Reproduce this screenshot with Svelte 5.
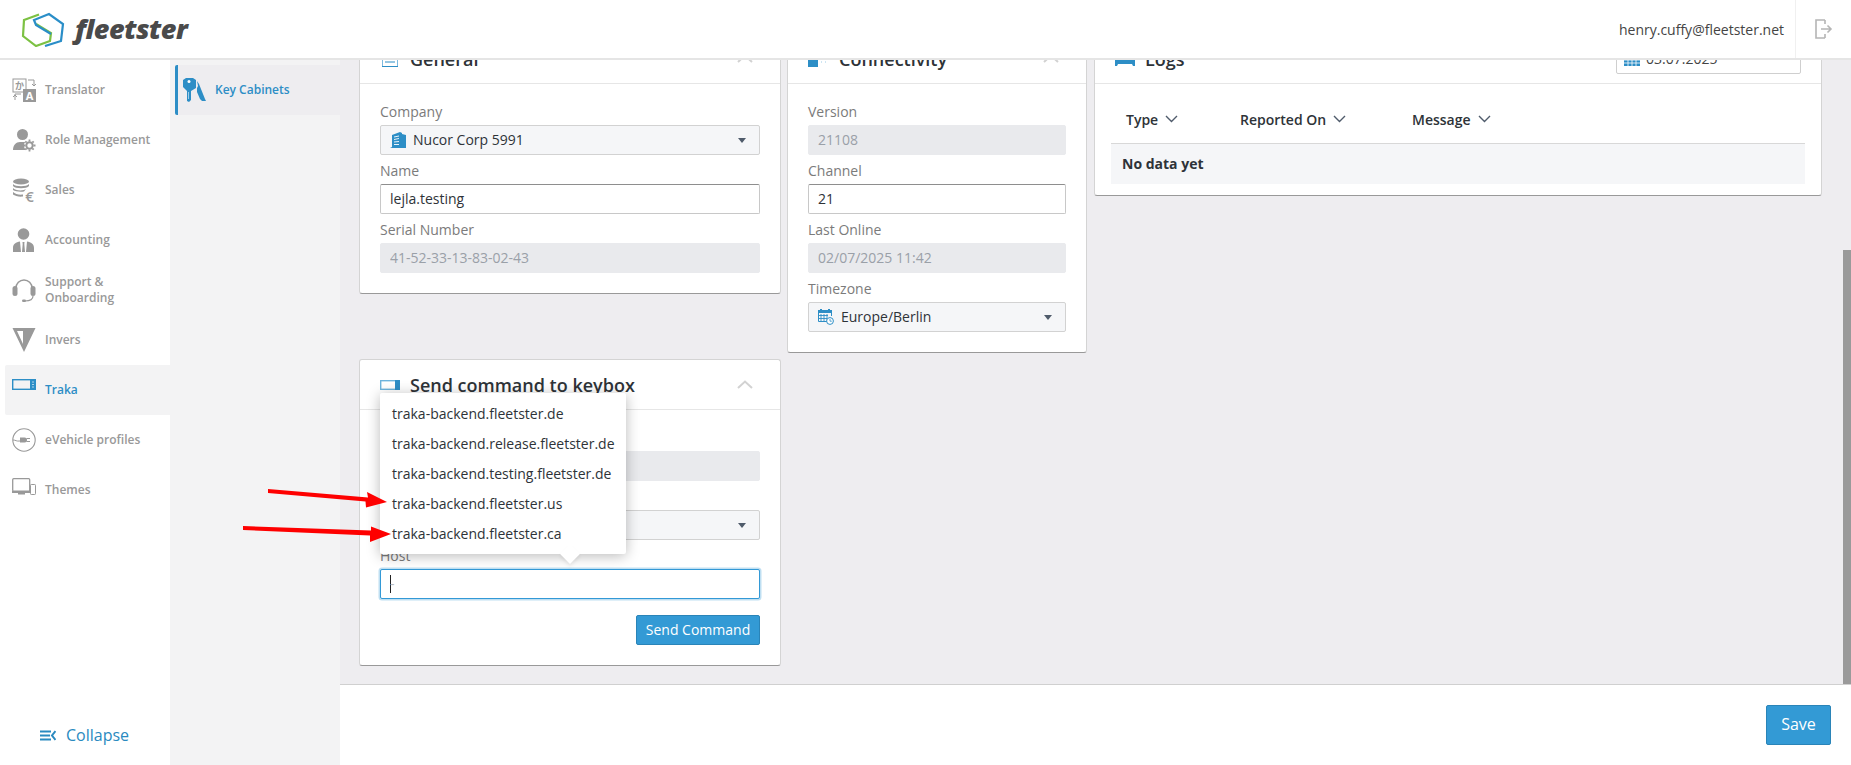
<script>
  const navItems = [
    { label: "Translator", icon: `<rect x="1" y="1" width="13" height="13" fill="none" stroke="#999"/><text x="3" y="11" font-size="9" fill="#999" font-family="Noto Sans CJK JP">か</text><path d="M16 2h6v5M20 6l2 2 2-2M9 16H3v6M1 19l2-2 2 2" fill="none" stroke="#999"/><rect x="11" y="11" width="13" height="13" fill="#999"/><text x="17.5" y="22" font-size="11" font-weight="700" fill="#fff" text-anchor="middle" font-family="Open Sans">A</text>` },
    { label: "Role Management", icon: `<circle cx="10.5" cy="6.5" r="5.5" fill="#999"/><path d="M1 22c0-5 3-8 7-8h6v8z" fill="#999"/><circle cx="17.5" cy="17.5" r="5.5" fill="#fff"/><circle cx="17.5" cy="17.5" r="3.2" fill="none" stroke="#999" stroke-width="2"/><path d="M17.5 11.5v2M17.5 21.5v2M11.5 17.5h2M21.5 17.5h2M13.3 13.3l1.4 1.4M20.3 20.3l1.4 1.4M13.3 21.7l1.4-1.4M20.3 14.7l1.4-1.4" stroke="#999" stroke-width="1.8"/>` },
    { label: "Sales", icon: `<ellipse cx="9" cy="3.5" rx="8" ry="3" fill="#999"/><path d="M1 6c2 3 14 3 16 0v2c-2 3-14 3-16 0zM1 10c2 3 11 3 13 1l-2 2.5c-4 .5-9 0-11-1.500zM1 14c2 2 6 3 10 2.500v2C7 19 3 18 1 16.500z" fill="#999"/><text x="17.5" y="24" font-size="15" fill="#999" text-anchor="middle" font-family="Open Sans">€</text>` },
    { label: "Accounting", icon: `<circle cx="11.500" cy="6" r="5.800" fill="#999"/><path d="M1 24v-4c0-4 3-6 7-6.500L9 24zM22 24v-4c0-4-3-6-7-6.500L14 24zM10.500 14h2l-.2 2 .7 8h-3l.7-8z" fill="#999"/>` },
    { label: "Support & Onboarding", icon: `<path d="M4 13V10a8 8 0 0 1 16 0v3" fill="none" stroke="#999" stroke-width="1.500"/><rect x="0.500" y="8" width="5" height="10" rx="2.500" fill="#999"/><rect x="18.500" y="8" width="5" height="10" rx="2.500" fill="#999"/><path d="M21 18c0 3-3 5-8 5" fill="none" stroke="#999" stroke-width="1.200"/><rect x="10" y="21.500" width="4" height="2.500" rx="1.200" fill="#999"/>` },
    { label: "Invers", icon: `<path fill-rule="evenodd" d="M0.500 0h23L12 24zM5 3l6 13 0-13z" fill="#999"/>` },
    { label: "Traka", active: true, icon: `<rect x="0.700" y="1.700" width="23" height="9.600" fill="none" stroke="#2d8ec6" stroke-width="1.400"/><rect x="18" y="1.700" width="6" height="9.600" fill="#2d8ec6"/><path d="M20 4h2M20 6.500h2M20 9h2" stroke="#cfe6f3" stroke-width=".8"/>` },
    { label: "eVehicle profiles", icon: `<circle cx="12" cy="12" r="11.200" fill="none" stroke="#999" stroke-width="1.100"/><path d="M1 12c3 0 3 1.500 7 1" fill="none" stroke="#999"/><path d="M8 9.500h4.500a2.500 2.500 0 0 1 0 5H8z" fill="#999"/><path d="M14.500 10.500h3.500M14.500 13.500h3.500" stroke="#999" stroke-width="1.200"/>` },
    { label: "Themes", icon: `<rect x="0.700" y="0.700" width="17" height="12.500" rx="1" fill="none" stroke="#999" stroke-width="1.300"/><path d="M6 15h7v1.500H6z" fill="#999"/><path d="M0 13h18v2H0z" fill="#999"/><rect x="18.500" y="6.500" width="5" height="10" rx=".8" fill="#fff" stroke="#999"/>` },
  ];

  const hosts = [
    "traka-backend.fleetster.de",
    "traka-backend.release.fleetster.de",
    "traka-backend.testing.fleetster.de",
    "traka-backend.fleetster.us",
    "traka-backend.fleetster.ca",
  ];

  const logColumns = ["Type", "Reported On", "Message"];
</script>

{#snippet chevronUp()}
  <svg class="collapse-toggle" width="16" height="9" viewBox="0 0 16 9"><path d="M1 8l7-6.500L15 8" fill="none" stroke="#d2d2d2" stroke-width="2"/></svg>
{/snippet}

{#snippet caret()}
  <svg class="caret" width="8" height="5" viewBox="0 0 8 5"><path d="M0 0h8L4 5z" fill="#4f5b6b"/></svg>
{/snippet}

<div class="app">
  <header class="topbar">
    <div class="logo">
      <svg width="46" height="36" viewBox="0 0 46 36">
        <path d="M18 3.500L3 9l-1 16 13 10 14-5 1-8-15-9" fill="none" stroke="#7cc143" stroke-width="2.200"/>
        <path d="M24 35l16-5 2-17L28 3 13 9l2 5 15 9" fill="none" stroke="#2a8ec8" stroke-width="2.200"/>
      </svg>
      <span class="wordmark">fleetster</span>
    </div>
    <div class="user">henry.cuffy@fleetster.net</div>
    <div class="logout">
      <svg width="18" height="20" viewBox="0 0 18 20">
        <path d="M10 1H1v18h9M10 1v4M10 15v4" fill="none" stroke="#b5b5b5" stroke-width="1.600"/>
        <path d="M6 10h10M12.500 6.500L16 10l-3.500 3.500" fill="none" stroke="#b5b5b5" stroke-width="1.600"/>
      </svg>
    </div>
  </header>

  <div class="body">
    <nav class="sidebar">
      {#each navItems as item}
        <div class="nav-item" class:active={item.active}>
          <svg width="24" height="24" viewBox="0 0 24 24" class="nav-icon">{@html item.icon}</svg>
          <span>{item.label}</span>
        </div>
      {/each}
      <div class="collapse">
        <svg width="16" height="11" viewBox="0 0 16 11"><path d="M0 1.500h11M0 5.500h10M0 9.500h11M15.500 1L12 5.500l3.500 4.500" fill="none" stroke="#2a8ac0" stroke-width="2"/></svg>
        <span>Collapse</span>
      </div>
    </nav>

    <aside class="subnav">
      <div class="subnav-item">
        <svg width="24" height="24" viewBox="0 0 24 24">
          <path d="M1 2l3-2h7l3 2v8l-5 3v9l-2 2-2-1v-10L1 9z" fill="#2d8ec6"/>
          <path d="M15 3l2 3 6 15 1 2h-4l-2-2-3-7v-4l1-2z" fill="#2d8ec6"/>
          <circle cx="7" cy="3.500" r="1.500" fill="#fff"/>
          <path d="M6.500 14v7" stroke="#bcdcf0" stroke-width=".8"/>
        </svg>
        <span>Key Cabinets</span>
      </div>
    </aside>

    <div class="content">
      <main class="scroller">
        <div class="row first">
          <section class="card general">
            <div class="card-head">
              <svg width="16" height="16" viewBox="0 0 16 16"><rect x=".5" y=".5" width="15" height="15" fill="#fff" stroke="#7dbbe0"/><path d="M0 15h16v1H0z" fill="#2d8ec6"/><path d="M3 5h10M3 8h10M3 11h10" stroke="#2d8ec6"/></svg>
              <h2>General</h2>
              {@render chevronUp()}
            </div>
            <div class="card-body">
              <div class="field-label">Company</div>
              <div class="select">
                <svg width="16" height="16" viewBox="0 0 16 16"><path d="M0 16l2-1V3l8-3 2 1v1l4 1v13z" fill="#2d8ec6"/><path d="M4 5l5-1M4 7.500l5-1M4 10l5-.5M4 12.500h5" stroke="#fff" stroke-width=".9"/></svg>
                <span>Nucor Corp 5991</span>
                {@render caret()}
              </div>
              <div class="field-label">Name</div>
              <input class="input" type="text" value="lejla.testing" />
              <div class="field-label">Serial Number</div>
              <input class="input" type="text" value="41-52-33-13-83-02-43" disabled />
            </div>
          </section>

          <section class="card connectivity">
            <div class="card-head">
              <svg width="20" height="16" viewBox="0 0 20 16"><rect x="0" y="0" width="10" height="16" fill="#2d8ec6"/><path d="M13 11h1M17 11h1" stroke="#9ccbe6"/></svg>
              <h2>Connectivity</h2>
              {@render chevronUp()}
            </div>
            <div class="card-body">
              <div class="field-label">Version</div>
              <input class="input" type="text" value="21108" disabled />
              <div class="field-label">Channel</div>
              <input class="input" type="text" value="21" />
              <div class="field-label">Last Online</div>
              <input class="input" type="text" value="02/07/2025 11:42" disabled />
              <div class="field-label">Timezone</div>
              <div class="select">
                <svg width="16" height="16" viewBox="0 0 16 16"><rect x="0" y="1" width="14" height="3" fill="#2d8ec6"/><rect x="2" y="0" width="2" height="2" fill="#2d8ec6"/><rect x="10" y="0" width="2" height="2" fill="#2d8ec6"/><path d="M.5 4v8.500h10M13.500 4v3" fill="none" stroke="#2d8ec6"/><path d="M0 6.500h10M0 9.500h9M3 5v7M6 5v7M9 5v6" stroke="#2d8ec6" stroke-width=".9"/><circle cx="12" cy="12" r="3.400" fill="#fff" stroke="#2d8ec6"/><path d="M12 10v2.200h1.800" fill="none" stroke="#2d8ec6" stroke-width=".8"/></svg>
                <span>Europe/Berlin</span>
                {@render caret()}
              </div>
            </div>
          </section>

          <section class="card logs">
            <div class="card-head">
              <svg width="20" height="16" viewBox="0 0 20 16"><path d="M0 0h20v15h-2l-1-2H3l-1 2H0z" fill="#2d8ec6"/></svg>
              <h2>Logs</h2>
              <div class="date-input">
                <svg width="16" height="14" viewBox="0 0 16 14"><rect y="0" width="16" height="14" fill="#2d8ec6"/><path d="M0 5h16M0 8h16M0 11h16M4 3v11M8 3v11M12 3v11" stroke="#fff" stroke-width=".8"/></svg>
                <span>03.07.2025</span>
              </div>
            </div>
            <div class="logs-body">
              <div class="log-head">
                {#each logColumns as col}
                  <div class="log-col">
                    {col}
                    <svg width="13" height="8" viewBox="0 0 13 8"><path d="M1 1l5.500 5.500L12 1" fill="none" stroke="#4f5b6b" stroke-width="1.400"/></svg>
                  </div>
                {/each}
              </div>
              <div class="log-empty">No data yet</div>
            </div>
          </section>
        </div>

        <div class="row">
          <section class="card general keybox">
            <div class="card-head">
              <svg width="20" height="10" viewBox="0 0 20 10"><rect x=".7" y=".7" width="18.600" height="8.600" fill="#fff" stroke="#6db3dc" stroke-width="1.400"/><rect x="15" y="0" width="5" height="10" fill="#2d8ec6"/></svg>
              <h2>Send command to keybox</h2>
              {@render chevronUp()}
            </div>
            <div class="card-body">
              <!-- these two labels sit under the host popover -->
              <div class="field-label"></div>
              <input class="input" type="text" disabled />
              <div class="field-label"></div>
              <div class="select">
                <span></span>
                {@render caret()}
              </div>
              <div class="host-wrap">
                <div class="field-label">Host</div>
                <div class="input focused"><i class="text-caret"></i><em>-</em></div>
                <div class="popover">
                  {#each hosts as host}
                    <div class="popover-item">{host}</div>
                  {/each}
                  <div class="popover-arrow"></div>
                </div>
              </div>
              <div class="actions">
                <button class="btn small">Send Command</button>
              </div>
            </div>
          </section>
        </div>

        <div class="scrollbar"></div>
      </main>

      <footer class="footer">
        <button class="btn save">Save</button>
      </footer>
    </div>
  </div>

  <svg class="annotations" width="1851" height="765" viewBox="0 0 1851 765">
    <path d="M268 489l100 8.500-1-5.500 20 10-21 5.500-.5-6L268 493z" fill="#fe0000"/>
    <path d="M243 526l128 4.500v-4l20 7.500-21 8v-6.500L243 530z" fill="#fe0000"/>
  </svg>
</div>

<style>
  :global(body) {
    margin: 0;
    font-family: "Open Sans", sans-serif;
    font-size: 14px;
    color: #2e3338;
  }

  .app {
    position: relative;
    display: flex;
    flex-direction: column;
    height: 765px;
    overflow: hidden;
  }

  .topbar {
    position: relative;
    z-index: 5;
    flex: none;
    display: flex;
    align-items: center;
    height: 58px;
    border-bottom: 2px solid #e5e5e5;
    background: #fff;
  }

  .logo {
    display: flex;
    align-items: center;
    gap: 8px;
    margin-left: 21px;
    margin-right: auto;
  }

  .wordmark {
    font-size: 27px;
    font-weight: 800;
    font-style: italic;
    letter-spacing: -0.5px;
    color: #4a4a4a;
    line-height: 36px;
  }

  .user {
    color: #444;
    font-size: 14px;
    margin-right: 11px;
  }

  .logout {
    display: flex;
    align-items: center;
    justify-content: center;
    width: 56px;
    height: 58px;
    border-left: 1px solid #f0f0f0;
    box-sizing: border-box;
  }

  .body {
    flex: 1;
    display: flex;
    min-height: 0;
  }

  .sidebar {
    flex: none;
    width: 170px;
    padding-top: 5px;
    box-sizing: border-box;
    display: flex;
    flex-direction: column;
    background: #fff;
  }

  .nav-item {
    display: flex;
    align-items: center;
    gap: 9px;
    height: 50px;
    margin-left: 5px;
    padding-left: 7px;
    font-size: 12px;
    font-weight: 600;
    line-height: 16px;
    color: #999;
  }

  .nav-item.active {
    background: #f3f3f4;
    border-radius: 2px 0 0 2px;
    color: #2d8ec6;
  }

  .nav-icon {
    flex: none;
  }

  .collapse {
    margin-top: auto;
    margin-bottom: 19px;
    display: flex;
    align-items: center;
    gap: 10px;
    padding-left: 40px;
    height: 22px;
    font-size: 16px;
    color: #2a8ac0;
  }

  .subnav {
    flex: none;
    width: 170px;
    padding: 5px 0 0 5px;
    box-sizing: border-box;
    background: #f3f3f4;
  }

  .subnav-item {
    display: flex;
    align-items: center;
    gap: 9px;
    height: 49px;
    padding: 0 0 1px 4px;
    border-left: 3px solid #2d8ec6;
    border-radius: 2px 0 0 2px;
    background: #eeedf0;
    font-size: 12px;
    font-weight: 600;
    color: #2d8ec6;
  }

  .content {
    flex: 1;
    min-width: 0;
    display: flex;
    flex-direction: column;
  }

  .scroller {
    position: relative;
    flex: 1;
    min-height: 0;
    overflow: hidden;
    background: #eeedf0;
    padding-left: 19px;
  }

  .row {
    display: flex;
    align-items: flex-start;
    margin-top: 6px;
  }

  /* page is scrolled a little, the card heads slide under the top bar */
  .row.first {
    margin-top: -27px;
  }

  .card {
    box-sizing: border-box;
    background: #fff;
    border: 1px solid #d4d4d4;
    border-bottom-color: #999;
    border-radius: 3px;
  }

  .general {
    width: 422px;
    margin-right: 6px;
  }

  .connectivity {
    width: 300px;
    margin-right: 7px;
  }

  .logs {
    width: 728px;
  }

  .card-head {
    display: flex;
    align-items: center;
    height: 49px;
    padding: 0 27px 0 20px;
    border-bottom: 1px solid #e6e6e6;
  }

  .logs .card-head {
    padding-right: 20px;
  }

  .card-head h2 {
    margin: 0 auto 0 10px;
    font-size: 18px;
    font-weight: 600;
    color: #2e3338;
    line-height: 24px;
  }

  .connectivity .card-head h2 {
    margin-left: 11px;
  }

  .general .card-head > svg:first-child {
    margin-left: 2px;
    margin-right: 2px;
  }

  .keybox .card-head > svg:first-child {
    margin: 0;
  }

  .card-body {
    padding: 12px 20px 20px;
  }

  .field-label {
    height: 19px;
    padding: 6px 0 4px;
    line-height: 19px;
    font-size: 14px;
    color: #7b7b7b;
  }

  .input {
    display: block;
    width: 100%;
    height: 30px;
    box-sizing: border-box;
    padding: 0 9px 2px;
    border: 1px solid #c8c8c8;
    border-top-color: #8e8e8e;
    border-radius: 2px;
    background: #fff;
    font: inherit;
    font-size: 14px;
    color: #2e3338;
    outline: none;
  }

  .input:disabled {
    border-color: #e9eaed;
    background: #e9eaed;
    color: #9aa0a8;
    opacity: 1;
  }

  .input.focused {
    position: relative;
    border-color: #3399d6;
    box-shadow: 0 0 0 1.5px #bfdff2;
  }

  .input.focused em {
    position: absolute;
    left: 9px;
    top: 4px;
    font-style: normal;
    color: #bbb;
  }

  .text-caret {
    position: absolute;
    left: 9px;
    top: 5px;
    width: 1px;
    height: 18px;
    background: #222;
  }

  .select {
    display: flex;
    align-items: center;
    gap: 7px;
    height: 30px;
    box-sizing: border-box;
    padding: 0 13px 0 9px;
    border: 1px solid #d2d2d2;
    border-radius: 2px;
    background: #f5f6f8;
    color: #2e3338;
  }

  .select span {
    margin-right: auto;
    padding-bottom: 2px;
  }

  .date-input {
    display: flex;
    align-items: center;
    gap: 6px;
    width: 185px;
    height: 30px;
    box-sizing: border-box;
    padding-left: 7px;
    border: 1px solid #cfcfcf;
    border-radius: 2px;
    color: #444;
    background: #fff;
  }

  .logs-body {
    padding: 13px 16px 11px;
  }

  .log-head {
    display: flex;
    align-items: center;
    height: 44px;
    padding: 0 0 2px 15px;
    border-bottom: 1px solid #d8d8d8;
    font-weight: 600;
    color: #2e3338;
  }

  .log-col {
    display: flex;
    align-items: center;
    gap: 7px;
    width: 114px;
  }

  .log-col:nth-child(2) {
    width: 172px;
  }

  .log-empty {
    height: 38px;
    display: flex;
    align-items: center;
    padding: 0 0 2px 11px;
    background: #f5f6f8;
    font-weight: 700;
    color: #2e3338;
  }

  .host-wrap {
    position: relative;
  }

  .popover {
    position: absolute;
    left: 0;
    bottom: 45px;
    width: 246px;
    height: 161px;
    padding: 6px 0 5px;
    box-sizing: border-box;
    background: #fff;
    border-radius: 2px;
    box-shadow: 0 2px 14px rgba(0, 0, 0, 0.28);
    z-index: 2;
  }

  .popover-item {
    height: 30px;
    line-height: 30px;
    padding-left: 12px;
    font-size: 14px;
    white-space: nowrap;
    color: #2e3338;
  }

  .popover-arrow {
    position: absolute;
    left: 183px;
    bottom: -7px;
    width: 14px;
    height: 14px;
    background: #fff;
    transform: rotate(45deg);
    box-shadow: 2px 2px 4px rgba(0, 0, 0, 0.08);
  }

  .actions {
    display: flex;
    justify-content: flex-end;
    margin-top: 16px;
  }

  .btn {
    border: 1px solid #2a84b8;
    border-radius: 2px;
    background: #339ad5;
    color: #fff;
    font-family: inherit;
    padding: 0 0 2px;
  }

  .btn.small {
    width: 124px;
    height: 30px;
    font-size: 14px;
  }

  .btn.save {
    width: 65px;
    height: 40px;
    font-size: 16px;
  }

  .scrollbar {
    position: absolute;
    right: 0;
    bottom: 0;
    width: 8px;
    height: 434px;
    background: #9a9a9a;
  }

  .footer {
    flex: none;
    height: 80px;
    display: flex;
    align-items: center;
    justify-content: flex-end;
    padding-right: 20px;
    border-top: 1px solid #d0d0d0;
    background: #fff;
  }

  .annotations {
    position: absolute;
    left: 0;
    top: 0;
    z-index: 10;
    pointer-events: none;
  }
</style>
